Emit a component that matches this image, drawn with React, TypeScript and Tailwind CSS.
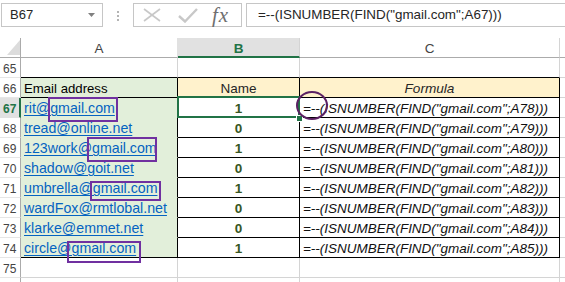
import React from 'react';

const GRID = "grid grid-cols-[21px_157px_122px_260px_5px] auto-rows-[20px]";

const data: [string, string, string][] = [
  ['rit@gmail.com', '1', 'A78'],
  ['tread@online.net', '0', 'A79'],
  ['123work@gmail.com', '1', 'A80'],
  ['shadow@goit.net', '0', 'A81'],
  ['umbrella@gmail.com', '1', 'A82'],
  ['wardFox@rmtlobal.net', '0', 'A83'],
  ['klarke@emmet.net', '0', 'A84'],
  ['circle@gmail.com', '1', 'A85'],
];

function RowHead({ n, sel }: { n?: number; sel?: boolean }) {
  return sel ? (
    <div className="border-b border-b-[#e1e1e1] border-r-2 border-r-[#217346] bg-[#e1e1e1] pl-[3px] pt-[3px] text-[12px] font-bold leading-[17px] text-[#217346]">
      {n}
    </div>
  ) : (
    <div className="border-b border-b-[#e6e6e6] border-r border-r-[#ababab] pl-[3px] pt-[3px] text-[12px] leading-[17px] text-[#444]">
      {n}
    </div>
  );
}

function EmptyRow({ n, topOfTable }: { n?: number; topOfTable?: boolean }) {
  const b = topOfTable ? 'border-b-black' : 'border-b-[#d4d4d4]';
  return (
    <>
      <RowHead n={n} />
      <div className={`border-b ${b} border-r border-r-[#d4d4d4]`} />
      <div className={`border-b ${b} border-r border-r-[#d4d4d4]`} />
      <div className={`border-b ${b} border-r border-r-[#d4d4d4]`} />
      <div className="border-b border-b-[#d4d4d4]" />
    </>
  );
}

export default function App() {
  return (
    <div className="relative h-[282px] w-[565px] overflow-hidden bg-white font-['Liberation_Sans',Arial,sans-serif] text-black">
      {/* Formula bar */}
      <div className="flex h-[38px] items-start pt-[3px]">
        <div className="ml-[1px] flex h-[24px] w-[102px] items-center justify-between border border-[#c6c6c6] pl-[8px] pr-[7px] text-[13px] text-[#262626]">
          <span>B67</span>
          <svg width="7" height="4" viewBox="0 0 7 4">
            <polygon points="0,0 7,0 3.5,4" fill="#808080" />
          </svg>
        </div>
        <div className="flex w-[30px] flex-col items-center gap-[2px] pt-[8px]">
          <div className="h-[2px] w-[2px] bg-[#b4b4b4]" />
          <div className="h-[2px] w-[2px] bg-[#b4b4b4]" />
          <div className="h-[2px] w-[2px] bg-[#b4b4b4]" />
        </div>
        <div className="flex h-[24px] w-[109px] items-center border border-[#c6c6c6] pl-[9px]">
          <svg width="18" height="14" viewBox="0 0 18 14">
            <line x1="1" y1="1" x2="17" y2="13" stroke="#c8c8c8" strokeWidth="1.6" />
            <line x1="17" y1="1" x2="1" y2="13" stroke="#c8c8c8" strokeWidth="1.6" />
          </svg>
          <svg className="ml-[17px]" width="20" height="15" viewBox="0 0 20 15">
            <polyline points="1,8 7,13.5 19,1" fill="none" stroke="#c8c8c8" strokeWidth="2.4" />
          </svg>
          <span className="ml-[14px] font-['Liberation_Serif',serif] text-[21px] italic leading-[20px] tracking-[1px] text-[#6f6f6f]">
            fx
          </span>
        </div>
        <div className="ml-[4px] flex h-[24px] flex-1 items-center border border-r-0 border-[#c6c6c6] pl-[11px] text-[13.42px] text-[#262626] whitespace-nowrap">
          =--(ISNUMBER(FIND("gmail.com";A67)))
        </div>
      </div>

      {/* Sheet */}
      <div className={GRID}>
        {/* column headers */}
        <div className="flex items-end justify-end border-b border-r border-[#ababab] pb-[2px]">
          <svg width="13" height="15" viewBox="0 0 13 15">
            <polygon points="13,0 13,15 0,15" fill="#dcdcdc" />
          </svg>
        </div>
        <div className="border-b border-b-[#ababab] border-r border-r-[#e1e1e1] pt-[2px] text-center text-[13.5px] leading-[17px] text-[#444]">
          A
        </div>
        <div className="border-b-2 border-b-[#217346] border-r border-r-[#d4d4d4] bg-[#e1e1e1] pt-[2px] text-center text-[13.5px] font-bold leading-[17px] text-[#217346]">
          B
        </div>
        <div className="border-b border-b-[#ababab] border-r border-r-[#d4d4d4] pt-[2px] text-center text-[13.5px] leading-[17px] text-[#444]">
          C
        </div>
        <div className="border-b border-b-[#ababab]" />

        <EmptyRow n={65} topOfTable />

        {/* row 66 */}
        <RowHead n={66} />
        <div className="border-b border-r border-black bg-[#e2efda] pl-[3px] pt-[2px] text-[13.2px] leading-[17px] whitespace-nowrap">
          Email address
        </div>
        <div className="border-b border-r border-black bg-[#fff2cc] pt-[2px] text-center text-[13.5px] leading-[17px] text-[#262626]">
          Name
        </div>
        <div className="border-b border-r border-black bg-[#fff2cc] pt-[2px] text-center text-[13.6px] italic leading-[17px] text-[#262626]">
          Formula
        </div>
        <div className="border-b border-b-[#d4d4d4]" />

        {data.map(([email, v, ref], i) => {
          const n = 67 + i;
          const last = i === data.length - 1;
          return (
            <React.Fragment key={n}>
              <RowHead n={n} sel={n === 67} />
              <div
                className={`border-b border-r border-r-black bg-[#e2efda] pl-[3px] pt-[2px] text-[14.2px] leading-[17px] whitespace-nowrap ${
                  last ? 'border-b-black' : 'border-b-[#e2efda]'
                }`}
              >
                <span className="text-[#0563c1] underline decoration-1 underline-offset-[2px]">{email}</span>
              </div>
              <div className="border-b border-r border-black pt-[2px] text-center text-[13.5px] font-bold leading-[17px] text-[#375623]">
                {v}
              </div>
              <div className="overflow-hidden border-b border-r border-black pl-[3px] pt-[2px] text-[13.47px] italic leading-[17px] whitespace-nowrap text-[#111]">
                =--(ISNUMBER(FIND("gmail.com";{ref})))
              </div>
              <div className="border-b border-b-[#d4d4d4]" />
            </React.Fragment>
          );
        })}

        <EmptyRow n={75} />
        <EmptyRow />
      </div>

      {/* Overlays: selection, annotations */}
      <div className="absolute left-[177px] top-[96px] h-[22px] w-[123px] border-2 border-[#217346]" />
      <div className="absolute left-[296px] top-[115px] h-[7px] w-[7px] border border-white bg-[#217346]" />

      <div className="absolute left-[48px] top-[97px] h-[25px] w-[70px] border-2 border-[#7030a0]" />
      <div className="absolute left-[87px] top-[137px] h-[25px] w-[70px] border-2 border-[#7030a0]" />
      <div className="absolute left-[90px] top-[181px] h-[20px] w-[71px] border-2 border-[#7030a0]" />
      <div className="absolute left-[67px] top-[241px] h-[22px] w-[74px] border-2 border-[#7030a0]" />

      <div className="absolute left-[296px] top-[91px] h-[29px] w-[32px] rounded-[50%] border-2 border-[#5b2163]" />
    </div>
  );
}
